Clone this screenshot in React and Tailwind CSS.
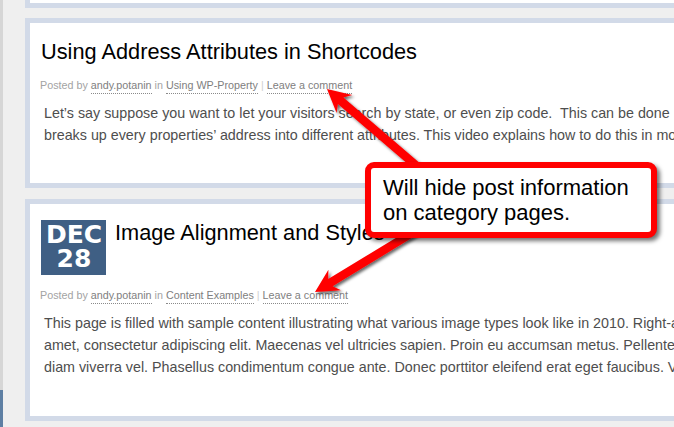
import React from "react";

function arrowPoints(tip, tail, headLen = 23, headHalf = 12, shaftHalf = 4.2, notch = 5) {
  const dx = tail[0] - tip[0];
  const dy = tail[1] - tip[1];
  const len = Math.hypot(dx, dy);
  const ux = dx / len;
  const uy = dy / len;
  const nx = -uy;
  const ny = ux;
  const p = (base, a, b) => [base[0] + ux * a + nx * b, base[1] + uy * a + ny * b];
  const pts = [
    tip,
    p(tip, headLen, headHalf),
    p(tip, headLen - notch, shaftHalf),
    p(tail, 0, shaftHalf),
    p(tail, 0, -shaftHalf),
    p(tip, headLen - notch, -shaftHalf),
    p(tip, headLen, -headHalf),
  ];
  return pts.map((q) => q[0].toFixed(1) + "," + q[1].toFixed(1)).join(" ");
}

function Arrows() {
  return (
    <svg className="absolute left-0 top-0" width="674" height="427" viewBox="0 0 674 427">
      <defs>
        <filter id="sh" x="-20%" y="-20%" width="140%" height="140%">
          <feDropShadow dx="2" dy="2" stdDeviation="1.4" floodColor="#000" floodOpacity="0.6" />
        </filter>
      </defs>
      <polygon points={arrowPoints([327, 89], [440, 186])} fill="#ff0000" filter="url(#sh)" />
      <polygon points={arrowPoints([315, 292], [430, 222])} fill="#ff0000" filter="url(#sh)" />
    </svg>
  );
}

function Meta({ category }) {
  return (
    <div className="ml-[-1px] mt-[12px] text-[10.75px] leading-[16px] whitespace-nowrap text-[#a3a3a3]">
      Posted by{" "}
      <span className="text-[#808080] border-b border-dotted border-[#8a8a8a] pb-[2px]">andy.potanin</span> in{" "}
      <span className="text-[#808080] border-b border-dotted border-[#8a8a8a] pb-[2px]">{category}</span>{" "}
      <span className="text-[#cfcfcf]">|</span>{" "}
      <span className="text-[#808080] border-b border-dotted border-[#8a8a8a] pb-[2px]">Leave a comment</span>
    </div>
  );
}

function Para({ lines }) {
  return (
    <div className="mt-[9px] pl-[3px] text-[14.3px] leading-[22px] text-[#4e4e4e] whitespace-nowrap">
      {lines.map((l, i) => (
        <div key={i}>{l}</div>
      ))}
    </div>
  );
}

export default function App() {
  return (
    <div
      className="relative w-[674px] h-[427px] overflow-hidden bg-[#efefef] flex"
      style={{ fontFamily: '"Liberation Sans", Arial, sans-serif' }}
    >
      <div className="w-[3px] shrink-0 flex flex-col">
        <div className="h-[390px] bg-[#d6d6d6]" />
        <div className="flex-1 bg-[#5e7fa3]" />
      </div>
      <div className="flex-1 pl-[22px] flex flex-col">
        <div className="shrink-0 w-[720px] h-[8px] bg-white border-l-[5px] border-b-[5px] border-[#d2dae8]" />
        <div className="shrink-0 w-[720px] mt-[10px] bg-white border-[5px] border-[#d2dae8] pt-[16px] pl-[11px] pb-[37px]">
          <h2 className="text-[21.75px] leading-[26px] text-black whitespace-nowrap">
            Using Address Attributes in Shortcodes
          </h2>
          <Meta category="Using WP-Property" />
          <Para
            lines={[
              "Let’s say suppose you want to let your visitors search by state, or even zip code.\u00a0 This can be done using our shortcodes",
              "breaks up every properties’ address into different attributes. This video explains how to do this in more detail.",
            ]}
          />
        </div>
        <div className="shrink-0 w-[720px] mt-[11px] bg-white border-[5px] border-[#d2dae8] pt-[16px] pl-[11px] pb-[38px]">
          <div className="flex items-start">
            <div
              className="w-[65px] h-[55px] bg-[#3f5f84] text-white font-bold text-[25px] leading-[24px] pt-[3px] pl-[1px] text-center"
              style={{ fontFamily: '"DejaVu Sans", Verdana, sans-serif' }}
            >
              <div>DEC</div>
              <div>28</div>
            </div>
            <h2 className="ml-[9px] text-[21.75px] leading-[26px] text-black whitespace-nowrap">
              Image Alignment and Styles
            </h2>
          </div>
          <Meta category="Content Examples" />
          <Para
            lines={[
              "This page is filled with sample content illustrating what various image types look like in 2010. Right-aligned image",
              "amet, consectetur adipiscing elit. Maecenas vel ultricies sapien. Proin eu accumsan metus. Pellentesque habitant",
              "diam viverra vel. Phasellus condimentum congue ante. Donec porttitor eleifend erat eget faucibus. Vivamus",
            ]}
          />
        </div>
      </div>
      <Arrows />
      <div className="absolute left-[365px] top-[162px] w-[292px] h-[76px] border-[6px] border-[#ff0000] rounded-[9px] bg-white shadow-[3px_3px_4px_rgba(0,0,0,0.55)] pl-[12px] pt-[7px] text-[22px] leading-[25px] text-black whitespace-nowrap">
        <div>Will hide post information</div>
        <div>on category pages.</div>
      </div>
    </div>
  );
}
